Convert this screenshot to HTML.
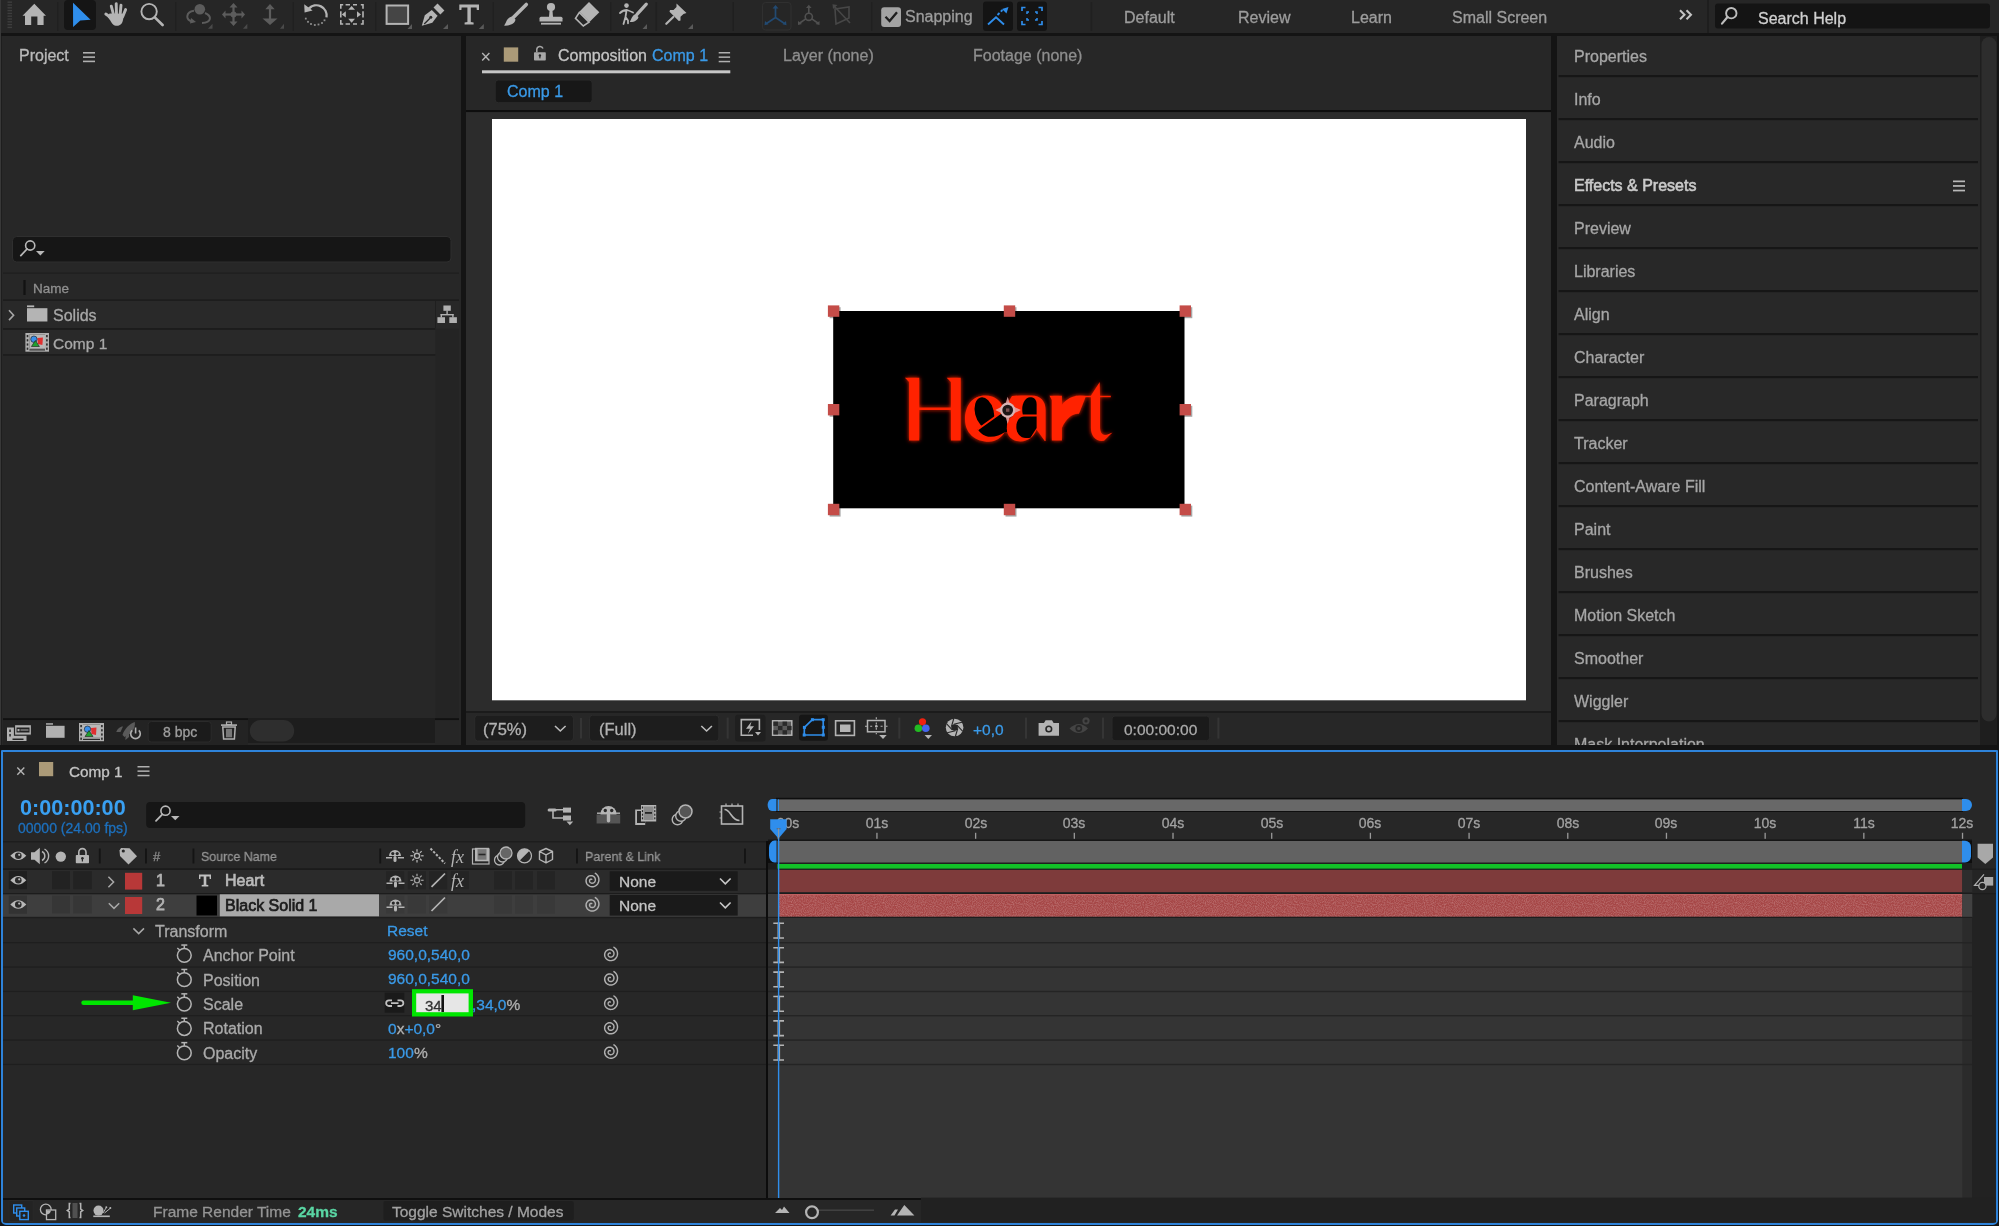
<!DOCTYPE html>
<html><head><meta charset="utf-8">
<style>
*{margin:0;padding:0;box-sizing:border-box}
html,body{width:1999px;height:1226px;overflow:hidden;background:#141414;font-family:"Liberation Sans",sans-serif;color:#a8a8a8}
.a{position:absolute}
.t{position:absolute;white-space:nowrap;font-size:16px;line-height:16px;will-change:transform;-webkit-text-stroke:0.3px currentColor}
svg{position:absolute;overflow:visible}
</style></head><body>
<div class="a" style="left:0px;top:0px;width:1999px;height:33px;background:#262626;"></div>
<div class="a" style="left:0px;top:33px;width:1999px;height:3px;background:#141414;"></div>
<svg style="left:0;top:0" width="1999" height="1226" viewBox="0 0 1999 1226"><rect x="7.5" y="1.5" width="4.5" height="1.4" fill="#3e3e3e"/><rect x="7.5" y="4.3" width="4.5" height="1.4" fill="#3e3e3e"/><rect x="7.5" y="7.1" width="4.5" height="1.4" fill="#3e3e3e"/><rect x="7.5" y="9.899999999999999" width="4.5" height="1.4" fill="#3e3e3e"/><rect x="7.5" y="12.7" width="4.5" height="1.4" fill="#3e3e3e"/><rect x="7.5" y="15.5" width="4.5" height="1.4" fill="#3e3e3e"/><rect x="7.5" y="18.299999999999997" width="4.5" height="1.4" fill="#3e3e3e"/><rect x="7.5" y="21.099999999999998" width="4.5" height="1.4" fill="#3e3e3e"/><rect x="7.5" y="23.9" width="4.5" height="1.4" fill="#3e3e3e"/><rect x="7.5" y="26.7" width="4.5" height="1.4" fill="#3e3e3e"/><rect x="57" y="2" width="1.5" height="29" fill="#202020"/><path d="M34.3,3.8 L46,15.8 L43.6,15.8 L43.6,25 L37.4,25 L37.4,16.6 L31.2,16.6 L31.2,25 L25,25 L25,15.8 L22.5,15.8 Z" fill="#b4b4b4"/><rect x="64" y="0" width="32" height="30" rx="4" fill="#151515"/><path d="M73,2.8 L90.6,19.8 L80.3,20.4 L73.1,27 Z" fill="#2f8eec"/><g stroke="#b4b4b4" stroke-width="2.9" stroke-linecap="round" fill="none"><path d="M113.6,15 L111.3,6.2"/><path d="M116.5,14 L116.2,3.6"/><path d="M120.2,14 L121,5.2"/><path d="M122.8,16.5 L125.6,9.6"/><path d="M111.5,18 L105.8,14"/></g><path d="M109.5,13.5 L124.5,13.8 L123.2,19 C122.5,23.5 120.5,25.8 117,25.8 C113.5,25.8 111.8,23.5 110.3,20.5 L107.6,17 Z" fill="#b4b4b4"/><circle cx="149.1" cy="11.55" r="7.7" stroke="#b4b4b4" stroke-width="1.9" fill="none"/><path d="M154.8,17.4 L162.6,25" stroke="#b4b4b4" stroke-width="2.7" stroke-linecap="round"/><rect x="175" y="2" width="1.5" height="29" fill="#202020"/><circle cx="199.8" cy="9.3" r="5.3" fill="#5c5c5c"/><path d="M194,10.8 C186,12 184.5,20 193,21.5" stroke="#5c5c5c" stroke-width="2" fill="none"/><path d="M191,18 L196,22 L190,23.5 Z" fill="#5c5c5c"/><path d="M205,13 C212,16 212,22.5 202,23" stroke="#5c5c5c" stroke-width="2" fill="none"/><path d="M208,28.7 L212.5,28.7 L212.5,23.8 Z" fill="#4a4a4a"/><g stroke="#5c5c5c" stroke-width="2.2"><path d="M233.5,6 L233.5,23.5"/><path d="M224.5,14.5 L242.5,14.5"/></g><path d="M229.5,7.5 L233.5,3 L237.5,7.5 Z M229.5,21.5 L233.5,26 L237.5,21.5 Z M225.5,10.5 L222,14.5 L225.5,18.5 Z M241.5,10.5 L245,14.5 L241.5,18.5 Z" fill="#5c5c5c"/><circle cx="233.5" cy="14.5" r="3" fill="#5c5c5c"/><path d="M243,28.7 L247.3,28.7 L247.3,23.8 Z" fill="#4a4a4a"/><path d="M270,7 L270,20" stroke="#5c5c5c" stroke-width="2.2"/><path d="M265.3,9.2 L270,4 L274.7,9.2 Z M262.5,18.6 L277.5,18.6 L270,25 Z" fill="#5c5c5c"/><path d="M280,28.7 L284,28.7 L284,23.8 Z" fill="#4a4a4a"/><rect x="292.5" y="2" width="1.5" height="29" fill="#202020"/><path d="M308.8,8.6 A10.3,10.3 0 0 1 326.5,17.4" stroke="#b4b4b4" stroke-width="2.3" fill="none"/><path d="M304.2,4.3 L304.6,12.6 L312.6,10.6 Z" fill="#b4b4b4"/><rect x="304.90000000000003" y="17.700000000000003" width="1.8" height="1.8" fill="#8e8e8e"/><rect x="307.1" y="20.900000000000002" width="1.8" height="1.8" fill="#8e8e8e"/><rect x="310.1" y="23.1" width="1.8" height="1.8" fill="#8e8e8e"/><rect x="313.90000000000003" y="24.1" width="1.8" height="1.8" fill="#8e8e8e"/><rect x="317.6" y="23.6" width="1.8" height="1.8" fill="#8e8e8e"/><rect x="321.1" y="22.1" width="1.8" height="1.8" fill="#8e8e8e"/><rect x="323.6" y="19.400000000000002" width="1.8" height="1.8" fill="#8e8e8e"/><path d="M340.8,8.8 L340.8,4.8 L343.2,4.8 M360.8,4.8 L363,4.8 L363,8.8 M340.8,20 L340.8,24 L343.2,24 M360.8,24 L363,24 L363,20 M345.6,4.8 h4.4 M353,4.8 h4 M345.6,24 h4.4 M353,24 h4 M340.8,11.2 v6.4 M363,11.2 v6.4" stroke="#b4b4b4" stroke-width="1.6" fill="none"/><path d="M348.2,9.8 L351.6,6 L355,9.8 Z M348.2,18.8 L351.6,22.8 L355,18.8 Z M345.8,11.2 L341.8,14.4 L345.8,17.6 Z M357,11.2 L361,14.4 L357,17.6 Z" fill="#b4b4b4"/><rect x="375" y="2" width="1.5" height="29" fill="#202020"/><rect x="386.6" y="5.5" width="21.5" height="18.4" stroke="#b4b4b4" stroke-width="2" fill="#454545"/><path d="M407.5,29 L412,29 L412,24 Z" fill="#5a5a5a"/><path d="M421.8,25.8 L424.8,15.3 L431.8,10 L437.6,15.8 L432.3,22.8 Z" fill="#b4b4b4"/><path d="M424.2,24 L430,18.2" stroke="#262626" stroke-width="1.3"/><circle cx="430.8" cy="17.3" r="1.5" fill="#262626"/><path d="M433.5,7.6 L437.5,3.6 L444.4,10.5 L440.4,14.5 Z" fill="#b4b4b4"/><path d="M443,29 L448,29 L448,24 Z" fill="#5a5a5a"/><path d="M459.3,4.6 L479,4.6 L479,10 L476.8,10 L476.6,7.4 L470.8,7.4 L470.8,22 L473.6,22.4 L473.6,24.5 L464.6,24.5 L464.6,22.4 L467.4,22 L467.4,7.4 L461.6,7.4 L461.4,10 L459.3,10 Z" fill="#b4b4b4"/><path d="M478.8,29 L483.8,29 L483.8,24 Z" fill="#5a5a5a"/><rect x="492.5" y="2" width="1.5" height="29" fill="#202020"/><path d="M526.3,4.4 L513.5,17.2" stroke="#b4b4b4" stroke-width="3.6" stroke-linecap="round"/><path d="M512.5,16.5 L515.5,19.5 C515,23 511,26 503.8,25.6 C506,24 506,20 509,18 C510,17 511.5,16.5 512.5,16.5 Z" fill="#b4b4b4"/><circle cx="551" cy="7" r="4.1" fill="#b4b4b4"/><path d="M549.6,9.5 L552.4,9.5 L553,17 L549,17 Z" fill="#b4b4b4"/><path d="M541,16.8 L561,16.8 Q562.5,16.8 562.5,18.3 L562.5,21.4 L539.5,21.4 L539.5,18.3 Q539.5,16.8 541,16.8 Z" fill="#b4b4b4"/><rect x="541" y="22.8" width="20" height="1.8" fill="#b4b4b4"/><path d="M589,2 L599.3,12.3 L589.5,22 L579.3,11.8 Z" fill="#b4b4b4"/><path d="M579.3,12.5 L589,22.2 L583.3,26 L575.5,18.3 Z" stroke="#b4b4b4" stroke-width="1.6" fill="none"/><rect x="610" y="2" width="1.5" height="29" fill="#202020"/><circle cx="626.5" cy="5.6" r="2.3" fill="#b4b4b4"/><path d="M620,13 Q623,10 627,10 Q630,11 633,12.5 M626.5,10.5 L625.5,17 L623.5,24 M625.5,17 L628,20.5 L628,23.3" stroke="#b4b4b4" stroke-width="1.8" fill="none" stroke-linecap="round"/><path d="M646.3,4.2 L637,14.4" stroke="#b4b4b4" stroke-width="3.2" stroke-linecap="round"/><path d="M635.5,14 L638.5,17 C638,20 634,22.5 629.8,22 C631.5,19 632,15.5 635.5,14 Z" fill="#b4b4b4"/><path d="M642.5,29 L647,29 L647,24 Z" fill="#5a5a5a"/><rect x="655.6" y="2" width="1.5" height="29" fill="#202020"/><path d="M676.5,3.5 L686.5,13 L683.5,14 L680.5,16.8 L680.5,20.5 L678.8,21 L669.5,11.8 L670,10 L673.5,10 L676.5,7 Z" fill="#b4b4b4"/><path d="M673.3,17 L666.3,23.8" stroke="#b4b4b4" stroke-width="2.2" stroke-linecap="round"/><path d="M688,29 L693,29 L693,24 Z" fill="#5a5a5a"/><rect x="732.4" y="2" width="1.5" height="29" fill="#202020"/><rect x="762.5" y="2.5" width="28.5" height="27.5" rx="3" stroke="#303030" stroke-width="1" fill="none"/><g stroke="#224a72" stroke-width="1.7" fill="none"><path d="M775.5,17.5 L775.5,7.5 M775.5,17.5 L766.5,23.5 M775.5,17.5 L784.5,23.5"/></g><path d="M772.5,8.5 L775.5,5 L778.5,8.5 Z M765,21 L764.5,25.3 L768.5,24.3 Z M786,21 L786.5,25.3 L782.5,24.3 Z" fill="#224a72"/><g stroke="#505050" stroke-width="1.6" fill="none"><circle cx="808.8" cy="16.8" r="3.6"/><path d="M808.8,13.2 L808.8,6.5 M805.8,18.8 L799.8,23 M811.8,18.8 L817.8,23"/></g><path d="M806,8 L808.8,4.8 L811.6,8 Z M798,21 L798,25 L802,24 Z M819.5,21 L819.5,25 L815.5,24 Z" fill="#505050"/><g stroke="#474747" stroke-width="1.6" fill="none"><path d="M835,9 L849,7 L849,18 L836,24 Z"/><path d="M834,6 L850,23"/></g><path d="M832.5,4.3 L837.5,5 L833,9 Z" fill="#474747"/><rect x="871" y="2" width="1.5" height="29" fill="#202020"/><rect x="881.2" y="7.2" width="19.8" height="19.8" rx="3" fill="#a3a3a3"/><path d="M885.5,16.8 L889.6,21 L897,12.2" stroke="#1e1e1e" stroke-width="2.3" fill="none"/><rect x="983" y="1.5" width="30" height="29.5" rx="3" fill="#141414"/><rect x="1017" y="1.5" width="30" height="29.5" rx="3" fill="#141414"/><path d="M988,24.5 L996,17.3 L1004,24.5" stroke="#2f8eec" stroke-width="1.9" fill="none"/><path d="M997.5,15 L999.5,13 M1000.8,11.7 L1002.5,10" stroke="#2f8eec" stroke-width="1.8"/><path d="M1002,9 L1008.5,7 L1006.5,13.5 Z" fill="#2f8eec"/><path d="M1022,11 L1022,7.5 L1025.5,7.5 M1038.5,7.5 L1042,7.5 L1042,11 M1042,21 L1042,24.5 L1038.5,24.5 M1025.5,24.5 L1022,24.5 L1022,21" stroke="#2f8eec" stroke-width="1.7" fill="none"/><path d="M1027,14 L1027,12 L1029,12 M1035,12 L1037,12 L1037,14 M1037,18 L1037,20 L1035,20 M1029,20 L1027,20 L1027,18" stroke="#2f8eec" stroke-width="1.5" fill="none"/><rect x="1090.7" y="2" width="1.5" height="29" fill="#202020"/><path d="M1680,10.3 L1684.5,14.8 L1680,19.3 M1686.5,10.3 L1691,14.8 L1686.5,19.3" stroke="#c4c4c4" stroke-width="2" fill="none"/><rect x="1707" y="0" width="2" height="33" fill="#1e1e1e"/><rect x="1715" y="3.6" width="275" height="25" rx="3" fill="#141414"/><circle cx="1731.3" cy="13.2" r="5.2" stroke="#bdbdbd" stroke-width="1.9" fill="none"/><path d="M1727.5,17 L1722,23.6" stroke="#bdbdbd" stroke-width="2.2" stroke-linecap="round"/></svg>
<div class="t" style="left:905.00px;top:9.46px;font-size:16px;line-height:16px;color:#9d9d9d;font-weight:normal;">Snapping</div>
<div class="t" style="left:1124.00px;top:9.66px;font-size:16px;line-height:16px;color:#9d9d9d;font-weight:normal;">Default</div>
<div class="t" style="left:1238.00px;top:9.66px;font-size:16px;line-height:16px;color:#9d9d9d;font-weight:normal;">Review</div>
<div class="t" style="left:1351.40px;top:9.66px;font-size:16px;line-height:16px;color:#9d9d9d;font-weight:normal;">Learn</div>
<div class="t" style="left:1452.00px;top:9.66px;font-size:16px;line-height:16px;color:#9d9d9d;font-weight:normal;">Small Screen</div>
<div class="t" style="left:1758.00px;top:11.46px;font-size:16px;line-height:16px;color:#d0d0d0;font-weight:normal;">Search Help</div>
<div class="a" style="left:2px;top:36px;width:459px;height:709px;background:#272727;"></div>
<div class="a" style="left:0px;top:0px;width:1px;height:745px;background:#383838;"></div>
<div class="a" style="left:1px;top:36px;width:1px;height:709px;background:#1e1e1e;"></div>
<div class="t" style="left:19.00px;top:48.46px;font-size:16px;line-height:16px;color:#bababa;font-weight:normal;">Project</div>
<svg style="left:0;top:0" width="1999" height="1226" viewBox="0 0 1999 1226"><rect x="83" y="52.00" width="12" height="1.6" fill="#b0b0b0"/><rect x="83" y="56.30" width="12" height="1.6" fill="#b0b0b0"/><rect x="83" y="60.60" width="12" height="1.6" fill="#b0b0b0"/><rect x="12.5" y="236.5" width="438.5" height="25.5" rx="4" fill="#161616" stroke="#2f2f2f" stroke-width="1"/><circle cx="30.2" cy="245.5" r="4.6" stroke="#b8b8b8" stroke-width="1.6" fill="none"/><path d="M27,249 L20.8,255.6" stroke="#b8b8b8" stroke-width="1.8" stroke-linecap="round"/><path d="M36,251 L44.7,251 L40.35,255.6 Z" fill="#b8b8b8"/><rect x="3" y="272.5" width="456" height="1.2" fill="#1f1f1f"/><rect x="3" y="299.3" width="456" height="1.6" fill="#1d1d1d"/><rect x="23.4" y="280" width="2.2" height="15" fill="#121212"/><rect x="3" y="301" width="432.5" height="27" fill="#292929"/><rect x="3" y="328" width="432.5" height="1.8" fill="#1c1c1c"/><rect x="3" y="330" width="432.5" height="24" fill="#292929"/><rect x="3" y="354" width="432.5" height="1.8" fill="#1d1d1d"/><rect x="435.6" y="301" width="23.4" height="417" fill="#242424"/><rect x="435.6" y="301" width="23.4" height="27.5" fill="#282828"/><rect x="435" y="301" width="1" height="27" fill="#1f1f1f"/><path d="M9,310.3 L13.6,315.2 L9,320.1" stroke="#a6a6a6" stroke-width="1.6" fill="none"/><rect x="27" y="305.4" width="7.2" height="1.8" fill="#b4b4b4"/><rect x="27" y="308.2" width="20.4" height="13.3" fill="#b4b4b4"/><rect x="25.4" y="333" width="23.6" height="18.7" fill="#b0b0b0"/><rect x="29.4" y="334.6" width="15.600000000000001" height="13.7" fill="#2a2a2a"/><rect x="29.4" y="349.3" width="15.600000000000001" height="1.2" fill="#2a2a2a"/><rect x="26.7" y="335.0" width="1.6" height="2.2" fill="#2a2a2a"/><rect x="46.1" y="335.0" width="1.6" height="2.2" fill="#2a2a2a"/><rect x="26.7" y="339.2" width="1.6" height="2.2" fill="#2a2a2a"/><rect x="46.1" y="339.2" width="1.6" height="2.2" fill="#2a2a2a"/><rect x="26.7" y="343.4" width="1.6" height="2.2" fill="#2a2a2a"/><rect x="46.1" y="343.4" width="1.6" height="2.2" fill="#2a2a2a"/><rect x="26.7" y="347.6" width="1.6" height="2.2" fill="#2a2a2a"/><rect x="46.1" y="347.6" width="1.6" height="2.2" fill="#2a2a2a"/><rect x="29.4" y="334.6" width="15.600000000000001" height="13.7" fill="#b8b8b8"/><path d="M37.4,338 L42.9,337.5 L42.4,345 L37.9,344 Z" fill="#e03030"/><circle cx="33.9" cy="339.2" r="3.2" fill="#3a8ee8" stroke="#1a1a1a" stroke-width="0.6"/><path d="M31.4,346.5 L35.4,340.5 L39.4,346.5 Z" fill="#20a030" stroke="#1a1a1a" stroke-width="0.6"/><rect x="443.4" y="305.5" width="7.4" height="5.3" fill="#b0b0b0"/><rect x="446.4" y="310.5" width="1.4" height="4" fill="#b0b0b0"/><rect x="440.6" y="314" width="13" height="1.4" fill="#b0b0b0"/><rect x="440.6" y="314" width="1.4" height="3.5" fill="#b0b0b0"/><rect x="452.2" y="314" width="1.4" height="3.5" fill="#b0b0b0"/><rect x="437.4" y="317.2" width="7.6" height="5.8" fill="#b0b0b0"/><rect x="449.3" y="317.2" width="7.6" height="5.8" fill="#b0b0b0"/><rect x="3" y="718.2" width="245" height="2" fill="#111111"/><rect x="435" y="718.2" width="24" height="2" fill="#111111"/><rect x="3" y="720.2" width="245" height="24.8" fill="#232323"/><rect x="248" y="718" width="187" height="25" fill="#1d1d1d"/><rect x="435" y="720.2" width="24" height="24.8" fill="#262626"/><rect x="249.8" y="720" width="44.4" height="21.5" rx="10.7" fill="#2e2e2e"/><rect x="7" y="727.5" width="19.5" height="13.5" fill="#b0b0b0"/><rect x="9.3" y="729.5" width="1.5" height="2.5" fill="#232323"/><rect x="9.3" y="734" width="1.5" height="2.5" fill="#232323"/><rect x="12.5" y="738.5" width="11" height="1.5" fill="#232323"/><rect x="14.5" y="724.6" width="17" height="10.6" fill="#b0b0b0" stroke="#232323" stroke-width="1.2"/><rect x="16.5" y="727.5" width="13" height="5" fill="#232323"/><rect x="17.5" y="729" width="2" height="2.2" fill="#b0b0b0"/><rect x="20.5" y="729.5" width="8" height="1" fill="#b0b0b0"/><rect x="46" y="723.2" width="7" height="1.5" fill="#b0b0b0"/><rect x="46" y="725.8" width="18.6" height="12" fill="#b0b0b0"/><rect x="79" y="723" width="25" height="18.2" fill="#b0b0b0"/><rect x="83" y="724.6" width="17" height="13.2" fill="#2a2a2a"/><rect x="83" y="738.8000000000001" width="17" height="1.2" fill="#2a2a2a"/><rect x="80.3" y="725.0" width="1.6" height="2.2" fill="#2a2a2a"/><rect x="101.1" y="725.0" width="1.6" height="2.2" fill="#2a2a2a"/><rect x="80.3" y="729.2" width="1.6" height="2.2" fill="#2a2a2a"/><rect x="101.1" y="729.2" width="1.6" height="2.2" fill="#2a2a2a"/><rect x="80.3" y="733.4" width="1.6" height="2.2" fill="#2a2a2a"/><rect x="101.1" y="733.4" width="1.6" height="2.2" fill="#2a2a2a"/><rect x="80.3" y="737.6" width="1.6" height="2.2" fill="#2a2a2a"/><rect x="101.1" y="737.6" width="1.6" height="2.2" fill="#2a2a2a"/><rect x="83" y="724.6" width="17" height="13.2" fill="#b8b8b8"/><path d="M91,728 L96.5,727.5 L96,735 L91.5,734 Z" fill="#e03030"/><circle cx="87.5" cy="729.2" r="3.2" fill="#3a8ee8" stroke="#1a1a1a" stroke-width="0.6"/><path d="M85,736.5 L89,730.5 L93,736.5 Z" fill="#20a030" stroke="#1a1a1a" stroke-width="0.6"/><path d="M134.8,722 C130,723.5 124,729 122.5,735 L124.5,737 C130,735 136,729 134.8,722 Z" fill="#5a5a5a"/><path d="M116.3,732 C117,729 120,726.5 123,726.5 L120.5,732 Z M125.5,740 C125,737 126,735 129,733.5 L129,737 Z" fill="#5a5a5a"/><path d="M132.2,730.3 A4.8,4.8 0 1 0 138.8,730.3" stroke="#b0b0b0" stroke-width="1.6" fill="none"/><rect x="134.8" y="727.5" width="1.6" height="6" fill="#b0b0b0"/><rect x="148.2" y="721.5" width="63" height="20.5" rx="3" fill="#1b1b1b" stroke="#2b2b2b" stroke-width="1"/><rect x="221" y="724.3" width="16" height="1.6" fill="#b0b0b0"/><rect x="226.5" y="722" width="5" height="2.5" fill="none" stroke="#b0b0b0" stroke-width="1.2"/><path d="M222.8,727 L235.2,727 L234.4,739 L223.6,739 Z" fill="none" stroke="#b0b0b0" stroke-width="1.5"/><rect x="226.4" y="728.8" width="1.2" height="8.5" fill="#b0b0b0"/><rect x="228.4" y="728.8" width="1.2" height="8.5" fill="#b0b0b0"/><rect x="230.4" y="728.8" width="1.2" height="8.5" fill="#b0b0b0"/></svg>
<div class="t" style="left:33.00px;top:281.57px;font-size:13.5px;line-height:13.5px;color:#909090;font-weight:normal;">Name</div>
<div class="t" style="left:53.00px;top:307.96px;font-size:16px;line-height:16px;color:#a8a8a8;font-weight:normal;">Solids</div>
<div class="t" style="left:53.00px;top:335.88px;font-size:15.5px;line-height:15.5px;color:#a8a8a8;font-weight:normal;">Comp 1</div>
<div class="t" style="left:163.00px;top:725.45px;font-size:14px;line-height:14px;color:#9e9e9e;font-weight:normal;">8 bpc</div>
<div class="a" style="left:466px;top:36px;width:1085px;height:709px;background:#272727;"></div>
<svg style="left:0;top:0" width="1999" height="1226" viewBox="0 0 1999 1226"><path d="M482.2,53 L489.4,60.6 M489.4,53 L482.2,60.6" stroke="#b4b4b4" stroke-width="1.4"/><rect x="503.8" y="47.4" width="14.4" height="14.3" fill="#ab9a78"/><rect x="534" y="52.2" width="11.8" height="8.4" rx="0.8" fill="#a8a8a8"/><path d="M536.8,52.3 L536.8,49.5 A3.2,3.2 0 0 1 543,48.5" stroke="#a8a8a8" stroke-width="1.5" fill="none"/><circle cx="539.9" cy="55.4" r="1.2" fill="#272727"/><rect x="539.3" y="55.4" width="1.2" height="3" fill="#272727"/><rect x="718.7" y="52.00" width="11.4" height="1.5" fill="#b0b0b0"/><rect x="718.7" y="56.40" width="11.4" height="1.5" fill="#b0b0b0"/><rect x="718.7" y="60.80" width="11.4" height="1.5" fill="#b0b0b0"/><rect x="482" y="70.3" width="248.3" height="3" fill="#c6c6c6"/><rect x="495.2" y="80" width="97" height="22.8" rx="3" fill="#171717" stroke="#2b2b2b" stroke-width="1"/><rect x="466" y="110" width="1085" height="2.2" fill="#0e0e0e"/><rect x="466" y="112.2" width="1085" height="599" fill="#2c2c2c"/><rect x="466" y="711" width="1085" height="2" fill="#1b1b1b"/><rect x="492" y="119" width="1034" height="581.3" fill="#ffffff"/><rect x="833.2" y="311" width="351.3" height="197.3" fill="#000000"/><rect x="829.6" y="307.2" width="11" height="11" fill="rgba(0,0,0,0.35)"/><rect x="827.9" y="305.4" width="11.4" height="11.4" fill="#c44c48"/><rect x="829.6" y="405.8" width="11" height="11" fill="rgba(0,0,0,0.35)"/><rect x="827.9" y="404.0" width="11.4" height="11.4" fill="#c44c48"/><rect x="829.6" y="505.6" width="11" height="11" fill="rgba(0,0,0,0.35)"/><rect x="827.9" y="503.8" width="11.4" height="11.4" fill="#c44c48"/><rect x="1005.5" y="307.2" width="11" height="11" fill="rgba(0,0,0,0.35)"/><rect x="1003.8" y="305.4" width="11.4" height="11.4" fill="#c44c48"/><rect x="1005.5" y="505.6" width="11" height="11" fill="rgba(0,0,0,0.35)"/><rect x="1003.8" y="503.8" width="11.4" height="11.4" fill="#c44c48"/><rect x="1181.3" y="307.2" width="11" height="11" fill="rgba(0,0,0,0.35)"/><rect x="1179.6" y="305.4" width="11.4" height="11.4" fill="#c44c48"/><rect x="1181.3" y="405.8" width="11" height="11" fill="rgba(0,0,0,0.35)"/><rect x="1179.6" y="404.0" width="11.4" height="11.4" fill="#c44c48"/><rect x="1181.3" y="505.6" width="11" height="11" fill="rgba(0,0,0,0.35)"/><rect x="1179.6" y="503.8" width="11.4" height="11.4" fill="#c44c48"/></svg>
<svg style="left:0;top:0" width="1999" height="1226" viewBox="0 0 1999 1226"><defs><filter id="glow" x="-20%%" y="-40%%" width="140%%" height="180%%"><feGaussianBlur in="SourceGraphic" stdDeviation="2.2" result="b"/><feMerge><feMergeNode in="b"/><feMergeNode in="SourceGraphic"/></feMerge></filter></defs><g filter="url(#glow)"><path d="M904.9,377.8 L919.25,377.8 L919.25,407.4 L950.9,407.4 L950.9,382 L946.7,377.8 L960.7,377.8 L960.7,440.5 L950.9,440.5 L950.9,409.9 L919.25,409.9 L919.25,440.5 L909.1,440.5 L909.1,382 Z" fill="#ff2400"/><path d="M1003.5,410.5 C1002,401 995,395.6 985.2,395.6 C972.5,395.6 965,406 965,419.3 C965,433 975,441.8 988.8,441.8 C996,441.8 1001.5,437.5 1004.6,432.3 L1006,410.5 Z" fill="#ff2400"/><ellipse cx="984.4" cy="412.6" rx="9.4" ry="15.6" transform="rotate(-14 984.4 412.6)" fill="#000"/><path d="M977.6,429.2 L1003.5,411 L1007,411 L1007,432 L1004.6,432.3 C1001,434.8 996,436.8 990.5,436.8 C985,436.8 980.5,433.5 977.6,429.2 Z" fill="#000"/><path d="M977.6,429.4 L1003.8,410.8" stroke="#ff2400" stroke-width="1.9"/><path d="M1003,411 L1012,396 C1018,395.6 1024,395.6 1032,395.6 C1040,395.6 1045.6,401 1045.6,410 L1045.6,441 L1044.7,441 L1036.6,429.6 C1034,437 1028,441.5 1020.5,441.5 C1012,441.5 1006.8,436 1006.8,428.5 C1006.8,421 1010,417.5 1013,416.5 Z" fill="#ff2400"/><path d="M1036.6,414.4 L1036.6,404 C1036.6,399 1033.5,397.2 1030,397.2 C1025.5,397.2 1022.2,403 1022.2,409 C1022.2,411 1022.4,413 1022.8,414.4 Z" fill="#000"/><path d="M1036.6,416.6 L1036.6,428 L1030.5,437.7 C1029,437.9 1027.5,438 1026,438 C1020,438 1016.3,433 1016.3,427 C1016.3,420.5 1020,416.6 1024,416.6 Z" fill="#000"/><path d="M1049.5,395.8 L1061.9,395.8 L1061.9,405 C1066,399 1073,395.8 1080,395.8 L1086,396 L1079,413.7 C1073,413 1066,418 1061.9,428 L1061.9,440.5 L1051.8,440.5 L1051.8,400 Z" fill="#ff2400"/><path d="M1099.7,382.1 L1100,395.8 L1110.8,395.8 L1110.8,397.3 L1100,397.3 L1100,427 C1100,432 1102,435 1105,435 C1107.5,435 1110,433.5 1112.5,432.6 L1104,440.8 C1096,442 1090.9,436 1090.9,428 L1090.9,397.3 L1075,397.3 L1075.6,395.8 L1090.9,395.8 Z" fill="#ff2400"/></g><g transform="translate(1007.7,410.1)"><path d="M0,-13.3 L2.6,-5 L13.3,0 L2.6,5 L0,14 L-2.6,5 L-12.4,0 L-2.6,-5 Z" fill="#e6a6a6" opacity="0.85"/><circle r="7.6" fill="#d8b4b4"/><circle r="5.4" fill="#1e1616"/><rect x="-1.7" y="-1.7" width="3.4" height="3.4" fill="#7a5050"/></g><rect x="474.7" y="715.2" width="98.7" height="25.8" rx="3" fill="#1d1d1d" stroke="#2c2c2c" stroke-width="1"/><path d="M555,726 L560.3,731 L565.6,726" stroke="#bcbcbc" stroke-width="1.6" fill="none"/><rect x="580" y="718" width="2" height="20.5" fill="#353535"/><rect x="589.5" y="715.2" width="129.3" height="25.8" rx="3" fill="#1d1d1d" stroke="#2c2c2c" stroke-width="1"/><path d="M701.3,726 L706.6,731 L711.9,726" stroke="#bcbcbc" stroke-width="1.6" fill="none"/><rect x="726.7" y="717.6" width="2" height="21" fill="#353535"/><rect x="735" y="714.8" width="30.5" height="26.6" rx="3" fill="#1f1f1f"/><path d="M753,735.3 L741.3,735.3 L741.3,719.6 L759.4,719.6 L759.4,730" stroke="#b4b4b4" stroke-width="1.6" fill="none"/><path d="M751.5,721.5 L746,728.8 L750,728.8 L747.8,734 L754,726.3 L750.2,726.3 Z" fill="#b4b4b4"/><path d="M755,732 L761,732 L758,735.5 Z" fill="#b4b4b4"/><rect x="772.6" y="720.8" width="19.2" height="14.4" stroke="#b4b4b4" stroke-width="1.5" fill="#5a5a5a"/><rect x="773.40" y="721.60" width="4.55" height="4.3" fill="#2a2a2a"/><rect x="773.40" y="730.20" width="4.55" height="4.3" fill="#2a2a2a"/><rect x="777.95" y="725.90" width="4.55" height="4.3" fill="#2a2a2a"/><rect x="782.50" y="721.60" width="4.55" height="4.3" fill="#2a2a2a"/><rect x="782.50" y="730.20" width="4.55" height="4.3" fill="#2a2a2a"/><rect x="787.05" y="725.90" width="4.55" height="4.3" fill="#2a2a2a"/><rect x="799" y="714.8" width="29" height="26" rx="3" fill="#161616"/><path d="M812.4,719.7 L823.2,719.7 L823.3,735 L804.2,735 L804.4,727.4 Z" stroke="#2f8eec" stroke-width="1.7" fill="none" stroke-linejoin="round"/><rect x="810.9" y="718.2" width="3" height="3" fill="#2f8eec"/><rect x="821.7" y="718.2" width="3" height="3" fill="#2f8eec"/><rect x="821.8" y="725.8" width="3" height="3" fill="#2f8eec"/><rect x="821.8" y="733.5" width="3" height="3" fill="#2f8eec"/><rect x="802.7" y="733.5" width="3" height="3" fill="#2f8eec"/><rect x="802.9" y="725.9" width="3" height="3" fill="#2f8eec"/><rect x="835.6" y="720.8" width="18.8" height="14.6" stroke="#b4b4b4" stroke-width="1.6" fill="none"/><rect x="840" y="724.5" width="10.5" height="7.5" fill="#b4b4b4"/><rect x="867.5" y="720.5" width="17.5" height="11.3" stroke="#b4b4b4" stroke-width="1.5" fill="none"/><path d="M876.3,717.3 L876.3,734.2 M865,726.2 L887.5,726.2" stroke="#b4b4b4" stroke-width="1.1" stroke-dasharray="2,3.2"/><circle cx="876.3" cy="726.2" r="1.3" fill="#b4b4b4"/><path d="M879.2,735 L886.7,735 L883,739 Z" fill="#b4b4b4"/><rect x="898.3" y="717.6" width="2" height="21" fill="#353535"/><circle cx="922.5" cy="721.8" r="3.6" fill="#ee2211"/><circle cx="918.4" cy="728.3" r="3.8" fill="#22bb22"/><circle cx="925.8" cy="728.3" r="3.8" fill="#4466ee"/><path d="M924.6,735 L932,735 L928.3,739 Z" fill="#b4b4b4"/><circle cx="954.6" cy="727.5" r="8.8" fill="#b4b4b4"/><circle cx="954.6" cy="727.5" r="3.3" fill="#272727"/><g stroke="#272727" stroke-width="1.1" fill="none"><path d="M957.79,728.35 L955.38,736.47"/><path d="M955.45,730.69 L947.23,732.66"/><path d="M952.27,729.83 L946.44,723.70"/><path d="M951.41,726.65 L953.82,718.53"/><path d="M953.75,724.31 L961.97,722.34"/><path d="M956.93,725.17 L962.76,731.30"/></g><rect x="1025" y="717.6" width="2" height="21" fill="#353535"/><path d="M1038.6,723 L1044,723 L1045.6,720.2 L1052,720.2 L1053.6,723 L1059,723 L1059,735.8 L1038.6,735.8 Z" fill="#b4b4b4"/><circle cx="1048.8" cy="729" r="3.6" fill="#272727"/><circle cx="1048.8" cy="729" r="2" fill="#b4b4b4"/><path d="M1069.5,728.5 Q1079,719.5 1088,728.5 Q1079,737.5 1069.5,728.5 Z" fill="#444444"/><circle cx="1078.8" cy="728.5" r="3.4" fill="#272727"/><circle cx="1078.8" cy="728.5" r="1.7" fill="#444"/><circle cx="1086" cy="720.8" r="3.6" fill="#444"/><circle cx="1086" cy="721" r="1.6" fill="#272727"/><rect x="1102" y="717.6" width="2" height="21" fill="#353535"/><rect x="1112" y="716" width="97.6" height="24.7" rx="3" fill="#1a1a1a" stroke="#2a2a2a" stroke-width="1"/><rect x="1217.4" y="717.6" width="2" height="21" fill="#353535"/></svg>
<div class="t" style="left:558.40px;top:48.46px;font-size:16px;line-height:16px;color:#c4c4c4;font-weight:normal;">Composition</div>
<div class="t" style="left:652.00px;top:48.46px;font-size:16px;line-height:16px;color:#3a9ae8;font-weight:normal;">Comp 1</div>
<div class="t" style="left:783.00px;top:47.96px;font-size:16px;line-height:16px;color:#8e8e8e;font-weight:normal;">Layer (none)</div>
<div class="t" style="left:973.40px;top:47.96px;font-size:16px;line-height:16px;color:#8e8e8e;font-weight:normal;">Footage (none)</div>
<div class="t" style="left:507.00px;top:84.06px;font-size:16px;line-height:16px;color:#3a9ae8;font-weight:normal;">Comp 1</div>
<div class="t" style="left:483.00px;top:720.63px;font-size:16.5px;line-height:16.5px;color:#b2b2b2;font-weight:normal;">(75%)</div>
<div class="t" style="left:598.70px;top:720.63px;font-size:16.5px;line-height:16.5px;color:#b2b2b2;font-weight:normal;">(Full)</div>
<div class="t" style="left:973.30px;top:721.58px;font-size:15.5px;line-height:15.5px;color:#3a9ae8;font-weight:normal;">+0,0</div>
<div class="t" style="left:1124.00px;top:721.58px;font-size:15.5px;line-height:15.5px;color:#aaaaaa;font-weight:normal;">0:00:00:00</div>
<div class="a" style="left:1557px;top:36px;width:440px;height:709px;background:#1e1e1e;"></div>
<div class="a" style="left:1557px;top:36px;width:423px;height:709px;overflow:hidden;background:#282828">
<svg style="left:0;top:0" width="423" height="709" viewBox="0 0 423 709"><rect x="1.5" y="39" width="419.5" height="2.2" fill="#161616"/><rect x="1.5" y="82" width="419.5" height="2.2" fill="#161616"/><rect x="1.5" y="125" width="419.5" height="2.2" fill="#161616"/><rect x="1.5" y="168" width="419.5" height="2.2" fill="#161616"/><rect x="1.5" y="211" width="419.5" height="2.2" fill="#161616"/><rect x="1.5" y="254" width="419.5" height="2.2" fill="#161616"/><rect x="1.5" y="297" width="419.5" height="2.2" fill="#161616"/><rect x="1.5" y="340" width="419.5" height="2.2" fill="#161616"/><rect x="1.5" y="383" width="419.5" height="2.2" fill="#161616"/><rect x="1.5" y="426" width="419.5" height="2.2" fill="#161616"/><rect x="1.5" y="469" width="419.5" height="2.2" fill="#161616"/><rect x="1.5" y="512" width="419.5" height="2.2" fill="#161616"/><rect x="1.5" y="555" width="419.5" height="2.2" fill="#161616"/><rect x="1.5" y="598" width="419.5" height="2.2" fill="#161616"/><rect x="1.5" y="641" width="419.5" height="2.2" fill="#161616"/><rect x="1.5" y="684" width="419.5" height="2.2" fill="#161616"/><rect x="1.5" y="727" width="419.5" height="2.2" fill="#161616"/></svg>
<div class="t" style="left:16.90px;top:13.06px;font-size:16px;line-height:16px;color:#a6a6a6;font-weight:normal;">Properties</div>
<div class="t" style="left:16.90px;top:56.06px;font-size:16px;line-height:16px;color:#a6a6a6;font-weight:normal;">Info</div>
<div class="t" style="left:16.90px;top:99.06px;font-size:16px;line-height:16px;color:#a6a6a6;font-weight:normal;">Audio</div>
<div class="t" style="left:16.90px;top:142.06px;font-size:16px;line-height:16px;color:#cacaca;font-weight:normal;-webkit-text-stroke:0.6px currentColor">Effects &amp; Presets</div>
<div class="t" style="left:16.90px;top:185.06px;font-size:16px;line-height:16px;color:#a6a6a6;font-weight:normal;">Preview</div>
<div class="t" style="left:16.90px;top:228.06px;font-size:16px;line-height:16px;color:#a6a6a6;font-weight:normal;">Libraries</div>
<div class="t" style="left:16.90px;top:271.06px;font-size:16px;line-height:16px;color:#a6a6a6;font-weight:normal;">Align</div>
<div class="t" style="left:16.90px;top:314.06px;font-size:16px;line-height:16px;color:#a6a6a6;font-weight:normal;">Character</div>
<div class="t" style="left:16.90px;top:357.06px;font-size:16px;line-height:16px;color:#a6a6a6;font-weight:normal;">Paragraph</div>
<div class="t" style="left:16.90px;top:400.06px;font-size:16px;line-height:16px;color:#a6a6a6;font-weight:normal;">Tracker</div>
<div class="t" style="left:16.90px;top:443.06px;font-size:16px;line-height:16px;color:#a6a6a6;font-weight:normal;">Content-Aware Fill</div>
<div class="t" style="left:16.90px;top:486.06px;font-size:16px;line-height:16px;color:#a6a6a6;font-weight:normal;">Paint</div>
<div class="t" style="left:16.90px;top:529.06px;font-size:16px;line-height:16px;color:#a6a6a6;font-weight:normal;">Brushes</div>
<div class="t" style="left:16.90px;top:572.06px;font-size:16px;line-height:16px;color:#a6a6a6;font-weight:normal;">Motion Sketch</div>
<div class="t" style="left:16.90px;top:615.06px;font-size:16px;line-height:16px;color:#a6a6a6;font-weight:normal;">Smoother</div>
<div class="t" style="left:16.90px;top:658.06px;font-size:16px;line-height:16px;color:#a6a6a6;font-weight:normal;">Wiggler</div>
<div class="t" style="left:16.90px;top:701.06px;font-size:16px;line-height:16px;color:#a6a6a6;font-weight:normal;">Mask Interpolation</div>
</div>
<svg style="left:0;top:0" width="1999" height="1226" viewBox="0 0 1999 1226"><rect x="1953" y="180.50" width="12" height="1.7" fill="#b8b8b8"/><rect x="1953" y="185.10" width="12" height="1.7" fill="#b8b8b8"/><rect x="1953" y="189.70" width="12" height="1.7" fill="#b8b8b8"/><rect x="1981.5" y="37" width="15" height="684.5" rx="7.5" fill="#2d2d2d"/></svg>
<div class="a" style="left:1px;top:750px;width:1997px;height:474.5px;border:2px solid #2e83da;border-radius:1px 1px 5px 5px;background:#272727"></div>
<svg style="left:0;top:0" width="1999" height="1226" viewBox="0 0 1999 1226"><path d="M17.3,767.6 L24.3,774.8 M24.3,767.6 L17.3,774.8" stroke="#b4b4b4" stroke-width="1.4"/><rect x="39" y="762" width="14.2" height="14.2" fill="#ab9a78"/><rect x="137.5" y="766.00" width="12" height="1.5" fill="#b0b0b0"/><rect x="137.5" y="770.40" width="12" height="1.5" fill="#b0b0b0"/><rect x="137.5" y="774.80" width="12" height="1.5" fill="#b0b0b0"/><rect x="146.2" y="802" width="379" height="26" rx="4" fill="#161616"/><circle cx="165.5" cy="810.7" r="4.6" stroke="#b8b8b8" stroke-width="1.6" fill="none"/><path d="M162.3,814.3 L156,820.8" stroke="#b8b8b8" stroke-width="1.8" stroke-linecap="round"/><path d="M171,816 L179.5,816 L175.25,820.2 Z" fill="#b8b8b8"/><path d="M549,809.8 L556,809.8 M553,809.8 L553,818 L563,818 M556,809.8 L563,809.8" stroke="#b4b4b4" stroke-width="1.6" fill="none"/><rect x="547.6" y="808.5" width="9" height="3" rx="1.5" fill="#b4b4b4"/><rect x="563" y="807.6" width="8" height="5" fill="#b4b4b4"/><rect x="563" y="815.5" width="8" height="5" fill="#b4b4b4"/><path d="M566.5,821.6 L573.2,821.6 L569.85,825.3 Z" fill="#b4b4b4"/><rect x="596.6" y="814.5" width="23.6" height="9" fill="#555"/><path d="M600.5,814 A8,8 0 0 1 616.5,814 L616.5,814.5 L600.5,814.5 Z" fill="#b4b4b4"/><circle cx="605.3" cy="810.5" r="1.7" fill="#272727"/><circle cx="611.7" cy="810.5" r="1.7" fill="#272727"/><rect x="606.8" y="813" width="3.4" height="9.5" rx="1.7" fill="#b4b4b4"/><rect x="597" y="812.5" width="4" height="1.4" fill="#b4b4b4"/><rect x="616" y="812.5" width="4" height="1.4" fill="#b4b4b4"/><rect x="635.2" y="809.5" width="10" height="15.5" fill="#b4b4b4"/><rect x="637" y="811" width="8" height="12" fill="#272727"/><rect x="641" y="805" width="15.2" height="16.5" fill="#b4b4b4"/><rect x="643.7" y="806.5" width="9.8" height="13.5" fill="#8a8a8a"/><rect x="645" y="812" width="7" height="1.8" fill="#272727"/><rect x="641.9" y="806.5" width="1.2" height="2" fill="#272727"/><rect x="654.2" y="806.5" width="1.2" height="2" fill="#272727"/><rect x="641.9" y="810.1" width="1.2" height="2" fill="#272727"/><rect x="654.2" y="810.1" width="1.2" height="2" fill="#272727"/><rect x="641.9" y="813.7" width="1.2" height="2" fill="#272727"/><rect x="654.2" y="813.7" width="1.2" height="2" fill="#272727"/><rect x="641.9" y="817.3" width="1.2" height="2" fill="#272727"/><rect x="654.2" y="817.3" width="1.2" height="2" fill="#272727"/><circle cx="677.5" cy="819.5" r="5.3" stroke="#b4b4b4" stroke-width="1.4" fill="#272727"/><circle cx="681" cy="816" r="5.3" stroke="#b4b4b4" stroke-width="1.4" fill="#272727"/><circle cx="685.5" cy="811.5" r="6.5" stroke="#b4b4b4" stroke-width="1.5" fill="#555"/><rect x="721.5" y="806" width="21" height="18" stroke="#b4b4b4" stroke-width="1.6" fill="none"/><path d="M724.5,809.5 C731,809.5 731,820.5 739.5,820.5" stroke="#b4b4b4" stroke-width="1.6" fill="none"/><path d="M726,806 v-2.5 M732,806 v-2.5 M738,806 v-2.5 M721.5,812 h-2 M721.5,818 h-2" stroke="#b4b4b4" stroke-width="1.2"/><rect x="766" y="841" width="2" height="357" fill="#0c0c0c"/><rect x="3" y="841" width="763" height="1.4" fill="#1d1d1d"/><rect x="3" y="868.3" width="763" height="1.7" fill="#1b1b1b"/><path d="M10.3,855.7 Q18.3,847.2 26.3,855.7 Q18.3,864.2 10.3,855.7 Z" fill="#b8b8b8"/><circle cx="18.3" cy="855.7" r="3.3" fill="#2a2a2a"/><circle cx="19.2" cy="854.8000000000001" r="1.1" fill="#b8b8b8"/><path d="M31,852.2 L34.5,852.2 L39.8,847.8 L39.8,864.2 L34.5,859.8 L31,859.8 Z" fill="#b4b4b4"/><path d="M42,851.5 A5,5 0 0 1 42,860.5 M44.5,849 A8,8 0 0 1 44.5,863" stroke="#b4b4b4" stroke-width="1.4" fill="none"/><circle cx="60.8" cy="856.6" r="5.2" fill="#b4b4b4"/><rect x="75.8" y="855" width="13.2" height="8.3" rx="0.8" fill="#b4b4b4"/><path d="M78.8,855.2 L78.8,852.2 A3.6,3.6 0 0 1 86,852.2 L86,855.2" stroke="#b4b4b4" stroke-width="1.6" fill="none"/><circle cx="82.4" cy="858.3" r="1.3" fill="#272727"/><rect x="81.8" y="858.3" width="1.2" height="3.2" fill="#272727"/><rect x="98.8" y="848.5" width="1.9" height="15" fill="#141414"/><rect x="145" y="848.5" width="1.9" height="15" fill="#141414"/><rect x="192.5" y="848.5" width="1.9" height="15" fill="#141414"/><rect x="379.3" y="848.5" width="1.9" height="15" fill="#141414"/><rect x="576" y="848.5" width="1.9" height="15" fill="#141414"/><rect x="744" y="848.5" width="1.9" height="15" fill="#141414"/><path d="M119.5,850.5 L121,848 L129.5,848.2 L137,856.3 L128.5,864.6 L120,856 Z" fill="#b4b4b4"/><circle cx="123.3" cy="851" r="1.6" fill="#272727"/><path d="M389,856 A6,6 0 0 1 401,856 Z" fill="#b4b4b4"/><circle cx="392.8" cy="853.6" r="1.6" fill="#262626"/><circle cx="397.2" cy="853.6" r="1.6" fill="#262626"/><rect x="393.5" y="856" width="3" height="6" rx="1.5" fill="#b4b4b4"/><rect x="386" y="857" width="6" height="1.5" fill="#b4b4b4"/><rect x="398" y="857" width="6" height="1.5" fill="#b4b4b4"/><circle cx="417" cy="855.8" r="2.6" stroke="#b4b4b4" stroke-width="1.4" fill="none"/><path d="M421.10,855.80 L423.60,855.80" stroke="#b4b4b4" stroke-width="1.3"/><path d="M419.90,858.70 L421.67,860.47" stroke="#b4b4b4" stroke-width="1.3"/><path d="M417.00,859.90 L417.00,862.40" stroke="#b4b4b4" stroke-width="1.3"/><path d="M414.10,858.70 L412.33,860.47" stroke="#b4b4b4" stroke-width="1.3"/><path d="M412.90,855.80 L410.40,855.80" stroke="#b4b4b4" stroke-width="1.3"/><path d="M414.10,852.90 L412.33,851.13" stroke="#b4b4b4" stroke-width="1.3"/><path d="M417.00,851.70 L417.00,849.20" stroke="#b4b4b4" stroke-width="1.3"/><path d="M419.90,852.90 L421.67,851.13" stroke="#b4b4b4" stroke-width="1.3"/><path d="M430.5,848.5 L445,863.5" stroke="#b4b4b4" stroke-width="2" stroke-dasharray="2.4,1.6"/><text x="451" y="862.5" font-family="Liberation Serif" font-style="italic" font-size="18" fill="#b4b4b4">fx</text><rect x="472.5" y="849" width="16.5" height="15" fill="none" stroke="#b4b4b4" stroke-width="1.2"/><rect x="475" y="847.8" width="14" height="13.5" fill="#b4b4b4"/><rect x="477.5" y="849.2" width="9" height="10.5" fill="#777"/><rect x="478.5" y="853.7" width="7" height="1.6" fill="#272727"/><circle cx="499.5" cy="860" r="5" stroke="#b4b4b4" stroke-width="1.3" fill="#272727"/><circle cx="502.5" cy="857" r="5" stroke="#b4b4b4" stroke-width="1.3" fill="#272727"/><circle cx="506" cy="853" r="6" stroke="#b4b4b4" stroke-width="1.3" fill="#666"/><circle cx="524.5" cy="855.8" r="7" fill="#b4b4b4"/><path d="M519.5,860.8 L529.5,850.8 A7,7 0 0 1 519.5,860.8 Z" fill="#272727"/><circle cx="524.5" cy="855.8" r="7" stroke="#b4b4b4" stroke-width="1.2" fill="none"/><path d="M546,848.5 L552.5,851.5 L552.5,859.5 L546,862.8 L539.5,859.5 L539.5,851.5 Z M539.5,851.5 L546,854.8 L552.5,851.5 M546,854.8 L546,862.8" stroke="#b4b4b4" stroke-width="1.4" fill="none" stroke-linejoin="round"/><rect x="3" y="870" width="763" height="23" fill="#2b2b2b"/><rect x="3" y="893" width="763" height="1.4" fill="#1c1c1c"/><rect x="3" y="894.4" width="763" height="22.6" fill="#3e3e3e"/><rect x="3" y="916.8" width="763" height="1.5" fill="#1e1e1e"/><rect x="8.8" y="871.2" width="18.2" height="18" fill="#1f1f1f"/><path d="M10.3,880.2 Q18.3,871.7 26.3,880.2 Q18.3,888.7 10.3,880.2 Z" fill="#b8b8b8"/><circle cx="18.3" cy="880.2" r="3.3" fill="#2a2a2a"/><circle cx="19.2" cy="879.3000000000001" r="1.1" fill="#b8b8b8"/><rect x="8.8" y="895.5" width="18.2" height="18.2" fill="#333333"/><path d="M10.3,904.5 Q18.3,896.0 26.3,904.5 Q18.3,913.0 10.3,904.5 Z" fill="#b8b8b8"/><circle cx="18.3" cy="904.5" r="3.3" fill="#2a2a2a"/><circle cx="19.2" cy="903.6" r="1.1" fill="#b8b8b8"/><rect x="52" y="871.2" width="18" height="18" fill="#222222"/><rect x="73.2" y="871.2" width="18.6" height="18" fill="#222222"/><rect x="52" y="895.5" width="18" height="18" fill="#363636"/><rect x="73.2" y="895.5" width="18.6" height="18" fill="#363636"/><path d="M108.4,876.8 L113.6,882 L108.4,887.2" stroke="#a8a8a8" stroke-width="1.5" fill="none"/><path d="M108.8,903.2 L114,908.4 L119.2,903.2" stroke="#a8a8a8" stroke-width="1.5" fill="none"/><rect x="125" y="872.8" width="17.2" height="16.8" fill="#b83838"/><rect x="125" y="897" width="17.2" height="17" fill="#b83838"/><path d="M199,874.6 L211,874.6 L211,879 L209.7,879 L209.5,876.6 L206.3,876.6 L206.3,884.7 L208.3,885 L208.3,886.4 L201.7,886.4 L201.7,885 L203.7,884.7 L203.7,876.6 L200.5,876.6 L200.3,879 L199,879 Z" fill="#c0c0c0"/><rect x="196.5" y="895.5" width="20.5" height="20" fill="#000000"/><rect x="219.8" y="894.3" width="159.2" height="22" fill="#a9a9a9"/><rect x="386" y="871.3" width="18.2" height="18" fill="#242424"/><rect x="407.8" y="871.3" width="18.2" height="18" fill="#242424"/><rect x="429" y="871.3" width="18.2" height="18" fill="#242424"/><rect x="450.8" y="871.3" width="18.2" height="18" fill="#242424"/><rect x="494" y="871.3" width="18" height="18.2" fill="#242424"/><rect x="494" y="895.5" width="18" height="18.2" fill="#393939"/><rect x="515" y="871.3" width="18" height="18.2" fill="#242424"/><rect x="515" y="895.5" width="18" height="18.2" fill="#393939"/><rect x="537" y="871.3" width="18" height="18.2" fill="#242424"/><rect x="537" y="895.5" width="18" height="18.2" fill="#393939"/><rect x="386" y="895.5" width="18.2" height="18" fill="#393939"/><rect x="407.8" y="895.5" width="18.2" height="18" fill="#393939"/><rect x="429" y="895.5" width="18.2" height="18" fill="#393939"/><path d="M389.5,881.5 A6,6 0 0 1 401.5,881.5 Z" fill="#b4b4b4"/><circle cx="393.3" cy="879.1" r="1.6" fill="#262626"/><circle cx="397.7" cy="879.1" r="1.6" fill="#262626"/><rect x="394.0" y="881.5" width="3" height="6" rx="1.5" fill="#b4b4b4"/><rect x="386.5" y="882.5" width="6" height="1.5" fill="#b4b4b4"/><rect x="398.5" y="882.5" width="6" height="1.5" fill="#b4b4b4"/><path d="M389.5,905.5 A6,6 0 0 1 401.5,905.5 Z" fill="#b4b4b4"/><circle cx="393.3" cy="903.1" r="1.6" fill="#262626"/><circle cx="397.7" cy="903.1" r="1.6" fill="#262626"/><rect x="394.0" y="905.5" width="3" height="6" rx="1.5" fill="#b4b4b4"/><rect x="386.5" y="906.5" width="6" height="1.5" fill="#b4b4b4"/><rect x="398.5" y="906.5" width="6" height="1.5" fill="#b4b4b4"/><circle cx="417" cy="880.3" r="2.6" stroke="#a0a0a0" stroke-width="1.4" fill="none"/><path d="M421.10,880.30 L423.60,880.30" stroke="#a0a0a0" stroke-width="1.3"/><path d="M419.90,883.20 L421.67,884.97" stroke="#a0a0a0" stroke-width="1.3"/><path d="M417.00,884.40 L417.00,886.90" stroke="#a0a0a0" stroke-width="1.3"/><path d="M414.10,883.20 L412.33,884.97" stroke="#a0a0a0" stroke-width="1.3"/><path d="M412.90,880.30 L410.40,880.30" stroke="#a0a0a0" stroke-width="1.3"/><path d="M414.10,877.40 L412.33,875.63" stroke="#a0a0a0" stroke-width="1.3"/><path d="M417.00,876.20 L417.00,873.70" stroke="#a0a0a0" stroke-width="1.3"/><path d="M419.90,877.40 L421.67,875.63" stroke="#a0a0a0" stroke-width="1.3"/><path d="M431.5,886.8 L445,873.5" stroke="#b4b4b4" stroke-width="1.7"/><path d="M431.5,911 L445,897.5" stroke="#b4b4b4" stroke-width="1.7"/><text x="451" y="887" font-family="Liberation Serif" font-style="italic" font-size="18" fill="#b4b4b4">fx</text><rect x="578" y="870" width="31" height="23" fill="#2b2b2b"/><path d="M591.74,879.31 L591.59,879.21 L591.41,879.14 L591.21,879.10 L590.99,879.10 L590.76,879.14 L590.54,879.22 L590.31,879.34 L590.11,879.51 L589.92,879.71 L589.77,879.96 L589.65,880.24 L589.58,880.55 L589.56,880.88 L589.59,881.22 L589.68,881.56 L589.83,881.89 L590.04,882.21 L590.30,882.50 L590.62,882.75 L590.99,882.96 L591.39,883.10 L591.83,883.19 L592.28,883.20 L592.75,883.15 L593.21,883.01 L593.66,882.80 L594.08,882.52 L594.46,882.16 L594.79,881.74 L595.06,881.26 L595.25,880.73 L595.36,880.17 L595.38,879.58 L595.31,878.99 L595.14,878.40 L594.88,877.83 L594.52,877.30 L594.08,876.82 L593.56,876.40 L592.98,876.07 L592.33,875.82 L591.64,875.68 L590.92,875.64 L590.20,875.71 L589.48,875.90 L588.79,876.21 L588.14,876.62 L587.55,877.14 L587.04,877.75 L586.62,878.44 L586.31,879.20 L586.12,880.01 L586.06,880.86 L586.12,881.72 L586.32,882.57 L586.66,883.39 L587.12,884.16 L587.70,884.86 L588.40,885.48 L589.19,885.98 L590.06,886.37 L590.99,886.62 L591.96,886.72 L592.96,886.68 L593.94,886.48 L594.90,886.12 L595.80,885.62 L596.62,884.98 L597.35,884.21 L597.95,883.33 L598.42,882.35 L598.74,881.30 L598.90,880.20 L598.88,879.08 L598.69,877.96 L598.33,876.87 L597.80,875.84 L597.11,874.88 L596.28,874.04 L595.31,873.32" stroke="#b0b0b0" stroke-width="1.45" fill="none" stroke-linecap="round"/><path d="M591.74,903.61 L591.59,903.51 L591.41,903.44 L591.21,903.40 L590.99,903.40 L590.76,903.44 L590.54,903.52 L590.31,903.64 L590.11,903.81 L589.92,904.01 L589.77,904.26 L589.65,904.54 L589.58,904.85 L589.56,905.18 L589.59,905.52 L589.68,905.86 L589.83,906.19 L590.04,906.51 L590.30,906.80 L590.62,907.05 L590.99,907.26 L591.39,907.40 L591.83,907.49 L592.28,907.50 L592.75,907.45 L593.21,907.31 L593.66,907.10 L594.08,906.82 L594.46,906.46 L594.79,906.04 L595.06,905.56 L595.25,905.03 L595.36,904.47 L595.38,903.88 L595.31,903.29 L595.14,902.70 L594.88,902.13 L594.52,901.60 L594.08,901.12 L593.56,900.70 L592.98,900.37 L592.33,900.12 L591.64,899.98 L590.92,899.94 L590.20,900.01 L589.48,900.20 L588.79,900.51 L588.14,900.92 L587.55,901.44 L587.04,902.05 L586.62,902.74 L586.31,903.50 L586.12,904.31 L586.06,905.16 L586.12,906.02 L586.32,906.87 L586.66,907.69 L587.12,908.46 L587.70,909.16 L588.40,909.78 L589.19,910.28 L590.06,910.67 L590.99,910.92 L591.96,911.02 L592.96,910.98 L593.94,910.78 L594.90,910.42 L595.80,909.92 L596.62,909.28 L597.35,908.51 L597.95,907.63 L598.42,906.65 L598.74,905.60 L598.90,904.50 L598.88,903.38 L598.69,902.26 L598.33,901.17 L597.80,900.14 L597.11,899.18 L596.28,898.34 L595.31,897.62" stroke="#b0b0b0" stroke-width="1.45" fill="none" stroke-linecap="round"/><rect x="609.7" y="871.3" width="128" height="19.5" fill="#1a1a1a"/><rect x="609.7" y="895" width="128" height="20.6" fill="#1a1a1a"/><path d="M720,878.5 L725.3,883.8 L730.6,878.5" stroke="#c8c8c8" stroke-width="1.6" fill="none"/><path d="M720,902.5 L725.3,907.8 L730.6,902.5" stroke="#c8c8c8" stroke-width="1.6" fill="none"/><rect x="3" y="942" width="763" height="1.3" fill="#1e1e1e"/><rect x="3" y="966.4" width="763" height="1.3" fill="#1e1e1e"/><rect x="3" y="990.8" width="763" height="1.3" fill="#1e1e1e"/><rect x="3" y="1015" width="763" height="1.3" fill="#1e1e1e"/><rect x="3" y="1039.4" width="763" height="1.3" fill="#1e1e1e"/><rect x="3" y="1063.8" width="763" height="1.3" fill="#1e1e1e"/><path d="M133.4,928.4 L138.7,933.6 L144,928.4" stroke="#a8a8a8" stroke-width="1.5" fill="none"/><circle cx="184.3" cy="955.3" r="6.9" stroke="#b4b4b4" stroke-width="1.5" fill="none"/><rect x="181.3" y="944.3" width="6" height="1.5" fill="#b4b4b4"/><rect x="183.55" y="945.3" width="1.5" height="3" fill="#b4b4b4"/><path d="M177.3,947.9 L179.70000000000002,950.0999999999999" stroke="#b4b4b4" stroke-width="1.4"/><path d="M610.34,953.21 L610.19,953.11 L610.01,953.04 L609.81,953.00 L609.59,953.00 L609.36,953.04 L609.14,953.12 L608.91,953.24 L608.71,953.41 L608.52,953.61 L608.37,953.86 L608.25,954.14 L608.18,954.45 L608.16,954.78 L608.19,955.12 L608.28,955.46 L608.43,955.79 L608.64,956.11 L608.90,956.40 L609.22,956.65 L609.59,956.86 L609.99,957.00 L610.43,957.09 L610.88,957.10 L611.35,957.05 L611.81,956.91 L612.26,956.70 L612.68,956.42 L613.06,956.06 L613.39,955.64 L613.66,955.16 L613.85,954.63 L613.96,954.07 L613.98,953.48 L613.91,952.89 L613.74,952.30 L613.48,951.73 L613.12,951.20 L612.68,950.72 L612.16,950.30 L611.58,949.97 L610.93,949.72 L610.24,949.58 L609.52,949.54 L608.80,949.61 L608.08,949.80 L607.39,950.11 L606.74,950.52 L606.15,951.04 L605.64,951.65 L605.22,952.34 L604.91,953.10 L604.72,953.91 L604.66,954.76 L604.72,955.62 L604.92,956.47 L605.26,957.29 L605.72,958.06 L606.30,958.76 L607.00,959.38 L607.79,959.88 L608.66,960.27 L609.59,960.52 L610.56,960.62 L611.56,960.58 L612.54,960.38 L613.50,960.02 L614.40,959.52 L615.22,958.88 L615.95,958.11 L616.55,957.23 L617.02,956.25 L617.34,955.20 L617.50,954.10 L617.48,952.98 L617.29,951.86 L616.93,950.77 L616.40,949.74 L615.71,948.78 L614.88,947.94 L613.91,947.22" stroke="#b0b0b0" stroke-width="1.45" fill="none" stroke-linecap="round"/><circle cx="184.3" cy="979.6999999999999" r="6.9" stroke="#b4b4b4" stroke-width="1.5" fill="none"/><rect x="181.3" y="968.6999999999999" width="6" height="1.5" fill="#b4b4b4"/><rect x="183.55" y="969.6999999999999" width="1.5" height="3" fill="#b4b4b4"/><path d="M177.3,972.3 L179.70000000000002,974.4999999999999" stroke="#b4b4b4" stroke-width="1.4"/><path d="M610.34,977.61 L610.19,977.51 L610.01,977.44 L609.81,977.40 L609.59,977.40 L609.36,977.44 L609.14,977.52 L608.91,977.64 L608.71,977.81 L608.52,978.01 L608.37,978.26 L608.25,978.54 L608.18,978.85 L608.16,979.18 L608.19,979.52 L608.28,979.86 L608.43,980.19 L608.64,980.51 L608.90,980.80 L609.22,981.05 L609.59,981.26 L609.99,981.40 L610.43,981.49 L610.88,981.50 L611.35,981.45 L611.81,981.31 L612.26,981.10 L612.68,980.82 L613.06,980.46 L613.39,980.04 L613.66,979.56 L613.85,979.03 L613.96,978.47 L613.98,977.88 L613.91,977.29 L613.74,976.70 L613.48,976.13 L613.12,975.60 L612.68,975.12 L612.16,974.70 L611.58,974.37 L610.93,974.12 L610.24,973.98 L609.52,973.94 L608.80,974.01 L608.08,974.20 L607.39,974.51 L606.74,974.92 L606.15,975.44 L605.64,976.05 L605.22,976.74 L604.91,977.50 L604.72,978.31 L604.66,979.16 L604.72,980.02 L604.92,980.87 L605.26,981.69 L605.72,982.46 L606.30,983.16 L607.00,983.78 L607.79,984.28 L608.66,984.67 L609.59,984.92 L610.56,985.02 L611.56,984.98 L612.54,984.78 L613.50,984.42 L614.40,983.92 L615.22,983.28 L615.95,982.51 L616.55,981.63 L617.02,980.65 L617.34,979.60 L617.50,978.50 L617.48,977.38 L617.29,976.26 L616.93,975.17 L616.40,974.14 L615.71,973.18 L614.88,972.34 L613.91,971.62" stroke="#b0b0b0" stroke-width="1.45" fill="none" stroke-linecap="round"/><circle cx="184.3" cy="1004.0999999999999" r="6.9" stroke="#b4b4b4" stroke-width="1.5" fill="none"/><rect x="181.3" y="993.0999999999999" width="6" height="1.5" fill="#b4b4b4"/><rect x="183.55" y="994.0999999999999" width="1.5" height="3" fill="#b4b4b4"/><path d="M177.3,996.6999999999999 L179.70000000000002,998.8999999999999" stroke="#b4b4b4" stroke-width="1.4"/><path d="M610.34,1002.01 L610.19,1001.91 L610.01,1001.84 L609.81,1001.80 L609.59,1001.80 L609.36,1001.84 L609.14,1001.92 L608.91,1002.04 L608.71,1002.21 L608.52,1002.41 L608.37,1002.66 L608.25,1002.94 L608.18,1003.25 L608.16,1003.58 L608.19,1003.92 L608.28,1004.26 L608.43,1004.59 L608.64,1004.91 L608.90,1005.20 L609.22,1005.45 L609.59,1005.66 L609.99,1005.80 L610.43,1005.89 L610.88,1005.90 L611.35,1005.85 L611.81,1005.71 L612.26,1005.50 L612.68,1005.22 L613.06,1004.86 L613.39,1004.44 L613.66,1003.96 L613.85,1003.43 L613.96,1002.87 L613.98,1002.28 L613.91,1001.69 L613.74,1001.10 L613.48,1000.53 L613.12,1000.00 L612.68,999.52 L612.16,999.10 L611.58,998.77 L610.93,998.52 L610.24,998.38 L609.52,998.34 L608.80,998.41 L608.08,998.60 L607.39,998.91 L606.74,999.32 L606.15,999.84 L605.64,1000.45 L605.22,1001.14 L604.91,1001.90 L604.72,1002.71 L604.66,1003.56 L604.72,1004.42 L604.92,1005.27 L605.26,1006.09 L605.72,1006.86 L606.30,1007.56 L607.00,1008.18 L607.79,1008.68 L608.66,1009.07 L609.59,1009.32 L610.56,1009.42 L611.56,1009.38 L612.54,1009.18 L613.50,1008.82 L614.40,1008.32 L615.22,1007.68 L615.95,1006.91 L616.55,1006.03 L617.02,1005.05 L617.34,1004.00 L617.50,1002.90 L617.48,1001.78 L617.29,1000.66 L616.93,999.57 L616.40,998.54 L615.71,997.58 L614.88,996.74 L613.91,996.02" stroke="#b0b0b0" stroke-width="1.45" fill="none" stroke-linecap="round"/><circle cx="184.3" cy="1028.5" r="6.9" stroke="#b4b4b4" stroke-width="1.5" fill="none"/><rect x="181.3" y="1017.5" width="6" height="1.5" fill="#b4b4b4"/><rect x="183.55" y="1018.5" width="1.5" height="3" fill="#b4b4b4"/><path d="M177.3,1021.1 L179.70000000000002,1023.3" stroke="#b4b4b4" stroke-width="1.4"/><path d="M610.34,1026.41 L610.19,1026.31 L610.01,1026.24 L609.81,1026.20 L609.59,1026.20 L609.36,1026.24 L609.14,1026.32 L608.91,1026.44 L608.71,1026.61 L608.52,1026.81 L608.37,1027.06 L608.25,1027.34 L608.18,1027.65 L608.16,1027.98 L608.19,1028.32 L608.28,1028.66 L608.43,1028.99 L608.64,1029.31 L608.90,1029.60 L609.22,1029.85 L609.59,1030.06 L609.99,1030.20 L610.43,1030.29 L610.88,1030.30 L611.35,1030.25 L611.81,1030.11 L612.26,1029.90 L612.68,1029.62 L613.06,1029.26 L613.39,1028.84 L613.66,1028.36 L613.85,1027.83 L613.96,1027.27 L613.98,1026.68 L613.91,1026.09 L613.74,1025.50 L613.48,1024.93 L613.12,1024.40 L612.68,1023.92 L612.16,1023.50 L611.58,1023.17 L610.93,1022.92 L610.24,1022.78 L609.52,1022.74 L608.80,1022.81 L608.08,1023.00 L607.39,1023.31 L606.74,1023.72 L606.15,1024.24 L605.64,1024.85 L605.22,1025.54 L604.91,1026.30 L604.72,1027.11 L604.66,1027.96 L604.72,1028.82 L604.92,1029.67 L605.26,1030.49 L605.72,1031.26 L606.30,1031.96 L607.00,1032.58 L607.79,1033.08 L608.66,1033.47 L609.59,1033.72 L610.56,1033.82 L611.56,1033.78 L612.54,1033.58 L613.50,1033.22 L614.40,1032.72 L615.22,1032.08 L615.95,1031.31 L616.55,1030.43 L617.02,1029.45 L617.34,1028.40 L617.50,1027.30 L617.48,1026.18 L617.29,1025.06 L616.93,1023.97 L616.40,1022.94 L615.71,1021.98 L614.88,1021.14 L613.91,1020.42" stroke="#b0b0b0" stroke-width="1.45" fill="none" stroke-linecap="round"/><circle cx="184.3" cy="1052.8999999999999" r="6.9" stroke="#b4b4b4" stroke-width="1.5" fill="none"/><rect x="181.3" y="1041.8999999999999" width="6" height="1.5" fill="#b4b4b4"/><rect x="183.55" y="1042.8999999999999" width="1.5" height="3" fill="#b4b4b4"/><path d="M177.3,1045.4999999999998 L179.70000000000002,1047.6999999999998" stroke="#b4b4b4" stroke-width="1.4"/><path d="M610.34,1050.81 L610.19,1050.71 L610.01,1050.64 L609.81,1050.60 L609.59,1050.60 L609.36,1050.64 L609.14,1050.72 L608.91,1050.84 L608.71,1051.01 L608.52,1051.21 L608.37,1051.46 L608.25,1051.74 L608.18,1052.05 L608.16,1052.38 L608.19,1052.72 L608.28,1053.06 L608.43,1053.39 L608.64,1053.71 L608.90,1054.00 L609.22,1054.25 L609.59,1054.46 L609.99,1054.60 L610.43,1054.69 L610.88,1054.70 L611.35,1054.65 L611.81,1054.51 L612.26,1054.30 L612.68,1054.02 L613.06,1053.66 L613.39,1053.24 L613.66,1052.76 L613.85,1052.23 L613.96,1051.67 L613.98,1051.08 L613.91,1050.49 L613.74,1049.90 L613.48,1049.33 L613.12,1048.80 L612.68,1048.32 L612.16,1047.90 L611.58,1047.57 L610.93,1047.32 L610.24,1047.18 L609.52,1047.14 L608.80,1047.21 L608.08,1047.40 L607.39,1047.71 L606.74,1048.12 L606.15,1048.64 L605.64,1049.25 L605.22,1049.94 L604.91,1050.70 L604.72,1051.51 L604.66,1052.36 L604.72,1053.22 L604.92,1054.07 L605.26,1054.89 L605.72,1055.66 L606.30,1056.36 L607.00,1056.98 L607.79,1057.48 L608.66,1057.87 L609.59,1058.12 L610.56,1058.22 L611.56,1058.18 L612.54,1057.98 L613.50,1057.62 L614.40,1057.12 L615.22,1056.48 L615.95,1055.71 L616.55,1054.83 L617.02,1053.85 L617.34,1052.80 L617.50,1051.70 L617.48,1050.58 L617.29,1049.46 L616.93,1048.37 L616.40,1047.34 L615.71,1046.38 L614.88,1045.54 L613.91,1044.82" stroke="#b0b0b0" stroke-width="1.45" fill="none" stroke-linecap="round"/><path d="M83.5,1002.8 L134,1002.8" stroke="#00e600" stroke-width="4.4" stroke-linecap="round"/><path d="M132.8,995.3 L171,1002.8 L132.8,1010.3 Z" fill="#00e600"/><rect x="384.7" y="992.7" width="19.6" height="20" fill="#1a1a1a"/><path d="M392,1000.3 L389,1000.3 A2.8,2.8 0 0 0 389,1006 L392,1006 M397.5,1000.3 L400.5,1000.3 A2.8,2.8 0 0 1 400.5,1006 L397.5,1006 M391,1003.2 L398.5,1003.2" stroke="#c0c0c0" stroke-width="1.8" fill="none"/><rect x="412" y="989.2" width="61" height="27.3" fill="#00e600"/><rect x="416.2" y="993.4" width="52.4" height="18.8" fill="#e6e6e6"/><rect x="441.4" y="995" width="2.6" height="17" fill="#111"/></svg>
<svg style="left:0;top:0" width="1999" height="1226" viewBox="0 0 1999 1226"><rect x="768" y="917.2" width="1204" height="281" fill="#343434"/><rect x="768" y="917.2" width="10" height="281" fill="#2f2f2f"/><rect x="1962.3" y="917.2" width="10" height="281" fill="#2b2b2b"/><rect x="1972" y="841" width="24" height="357" fill="#222222"/><rect x="1972" y="841" width="24" height="28" fill="#262626"/><rect x="1972" y="869" width="24" height="24" fill="#242424"/><rect x="1972" y="868.5" width="24" height="1.2" fill="#1c1c1c"/><rect x="1972" y="893" width="24" height="1.2" fill="#1c1c1c"/><rect x="768" y="942" width="1204" height="1.4" fill="#242424"/><rect x="768" y="966.4" width="1204" height="1.4" fill="#242424"/><rect x="768" y="990.8" width="1204" height="1.4" fill="#242424"/><rect x="768" y="1015" width="1204" height="1.4" fill="#242424"/><rect x="768" y="1039.4" width="1204" height="1.4" fill="#242424"/><rect x="768" y="1063.8" width="1204" height="1.4" fill="#242424"/><rect x="776" y="797.8" width="1187" height="14.2" fill="#0e0e0e"/><rect x="777.4" y="799.4" width="1184.6" height="11.6" fill="#686868"/><path d="M776.5,799 L772,799 A4.4,6 0 0 0 772,811 L776.5,811 Z" fill="#2f8eec"/><path d="M1962,799 L1966,799 A6,6 0 0 1 1966,811 L1962,811 Z" fill="#2f8eec"/><rect x="777.8" y="799.4" width="1.2" height="11.6" fill="#2f8eec"/><rect x="777.60" y="832.8" width="1.3" height="6" fill="#9a9a9a"/><rect x="876.29" y="832.8" width="1.3" height="6" fill="#9a9a9a"/><rect x="974.98" y="832.8" width="1.3" height="6" fill="#9a9a9a"/><rect x="1073.67" y="832.8" width="1.3" height="6" fill="#9a9a9a"/><rect x="1172.36" y="832.8" width="1.3" height="6" fill="#9a9a9a"/><rect x="1271.05" y="832.8" width="1.3" height="6" fill="#9a9a9a"/><rect x="1369.74" y="832.8" width="1.3" height="6" fill="#9a9a9a"/><rect x="1468.43" y="832.8" width="1.3" height="6" fill="#9a9a9a"/><rect x="1567.12" y="832.8" width="1.3" height="6" fill="#9a9a9a"/><rect x="1665.81" y="832.8" width="1.3" height="6" fill="#9a9a9a"/><rect x="1764.50" y="832.8" width="1.3" height="6" fill="#9a9a9a"/><rect x="1863.19" y="832.8" width="1.3" height="6" fill="#9a9a9a"/><rect x="1961.88" y="832.8" width="1.3" height="6" fill="#9a9a9a"/><rect x="768" y="839.5" width="1204" height="1.5" fill="#151515"/><rect x="768" y="841" width="1204" height="22" fill="#0e0e0e"/><rect x="777.4" y="841" width="1184.6" height="21.6" fill="#626262"/><path d="M776.6,840.6 L774.5,840.6 A5.5,7 0 0 0 769,847.6 L769,855.6 A5.5,7 0 0 0 774.5,862.6 L776.6,862.6 Z" fill="#2f8eec"/><path d="M1962,840.8 L1965,840.8 A6,6 0 0 1 1971,846.8 L1971,856.6 A6,6 0 0 1 1965,862.6 L1962,862.6 Z" fill="#2f8eec"/><rect x="768" y="863" width="1204" height="7" fill="#1e1e1e"/><rect x="777.4" y="864" width="1184.6" height="4.6" fill="#12c128"/><rect x="768" y="869.6" width="1194.3" height="23" fill="#2b2b2b"/><rect x="778" y="870" width="1184.3" height="22.2" fill="#7e3b3b"/><rect x="1962.3" y="870" width="10" height="22.6" fill="#2d2d2d"/><rect x="768" y="892.6" width="1204" height="1.5" fill="#1c1c1c"/><rect x="768" y="894" width="1194.3" height="23" fill="#3e3e3e"/><defs><filter id="noise" x="0" y="0" width="100%" height="100%"><feTurbulence type="fractalNoise" baseFrequency="0.9" numOctaves="2" seed="3" result="n"/><feColorMatrix in="n" type="matrix" values="0 0 0 0 0.78  0 0 0 0 0.38  0 0 0 0 0.38  0 0 0 0.6 -0.22" result="c"/><feComposite in="c" in2="SourceGraphic" operator="in" result="cc"/><feMerge><feMergeNode in="SourceGraphic"/><feMergeNode in="cc"/></feMerge></filter></defs><rect x="778" y="894" width="1184.3" height="22.8" fill="#a64647" filter="url(#noise)"/><rect x="778" y="894" width="1184.3" height="1.2" fill="#c06060"/><rect x="1962.3" y="894" width="10" height="23" fill="#414141"/><rect x="768" y="916.8" width="1204" height="1.2" fill="#1e1e1e"/><path d="M773.3,923.3 L784.0,923.3 M773.3,938.0 L784.0,938.0" stroke="#b4b4b4" stroke-width="1.6"/><rect x="777.5" y="922.5" width="2.6" height="16.3" fill="#b4b4b4"/><path d="M773.3,947.6999999999999 L784.0,947.6999999999999 M773.3,962.4 L784.0,962.4" stroke="#b4b4b4" stroke-width="1.6"/><rect x="777.5" y="946.9" width="2.6" height="16.3" fill="#b4b4b4"/><path d="M773.3,972.0999999999999 L784.0,972.0999999999999 M773.3,986.8 L784.0,986.8" stroke="#b4b4b4" stroke-width="1.6"/><rect x="777.5" y="971.3" width="2.6" height="16.3" fill="#b4b4b4"/><path d="M773.3,996.5 L784.0,996.5 M773.3,1011.2 L784.0,1011.2" stroke="#b4b4b4" stroke-width="1.6"/><rect x="777.5" y="995.7" width="2.6" height="16.3" fill="#b4b4b4"/><path d="M773.3,1020.9 L784.0,1020.9 M773.3,1035.6 L784.0,1035.6" stroke="#b4b4b4" stroke-width="1.6"/><rect x="777.5" y="1020.1" width="2.6" height="16.3" fill="#b4b4b4"/><path d="M773.3,1045.3 L784.0,1045.3 M773.3,1060.0 L784.0,1060.0" stroke="#b4b4b4" stroke-width="1.6"/><rect x="777.5" y="1044.5" width="2.6" height="16.3" fill="#b4b4b4"/><path d="M1977.6,843.8 L1993,843.8 L1993,857.6 L1985.3,864 L1977.6,857.6 Z" fill="#a8a8a8"/><path d="M1984,874.3 L1974.5,885.3 L1983,885.3" stroke="#b0b0b0" stroke-width="1.2" fill="none"/><rect x="1984" y="877" width="9.2" height="8.6" fill="#a8a8a8"/><circle cx="1982.4" cy="886" r="3.6" stroke="#b0b0b0" stroke-width="1.3" fill="#262626"/><rect x="3" y="1198" width="918" height="2" fill="#0f0f0f"/><rect x="3" y="1200" width="918" height="22.4" fill="#262626"/><rect x="921" y="1197.6" width="1075" height="24.8" fill="#212121"/><rect x="9" y="1200.4" width="24.2" height="21" fill="#232323" stroke="#2b2b2b" stroke-width="0.8"/><rect x="13.7" y="1205" width="8" height="8" fill="#232323" stroke="#2f8eec" stroke-width="1.4"/><rect x="16.7" y="1208" width="8" height="8" fill="#232323" stroke="#2f8eec" stroke-width="1.4"/><rect x="19.8" y="1211.3" width="8.5" height="8.3" fill="#232323" stroke="#2f8eec" stroke-width="1.4"/><circle cx="24" cy="1215.5" r="1.3" fill="#2f8eec"/><circle cx="45.8" cy="1209.5" r="5.4" stroke="#b4b4b4" stroke-width="1.3" fill="none"/><rect x="46.5" y="1210" width="9.2" height="9.6" stroke="#b4b4b4" stroke-width="1.3" fill="#262626"/><path d="M47,1210.5 L51,1210.5 A5,5 0 0 1 47,1214.5 Z" fill="#b4b4b4"/><path d="M70.5,1203.5 L69.3,1203.5 L69.3,1209 L67.3,1210.4 L69.3,1211.8 L69.3,1217.5 L70.5,1217.5 M79.5,1203.5 L80.7,1203.5 L80.7,1209 L82.7,1210.4 L80.7,1211.8 L80.7,1217.5 L79.5,1217.5" stroke="#b4b4b4" stroke-width="1.5" fill="none"/><rect x="72.5" y="1203" width="5" height="15" fill="#505050"/><circle cx="98.5" cy="1210.6" r="5" fill="#b4b4b4"/><rect x="93.3" y="1215.5" width="16.5" height="1.6" fill="#b4b4b4"/><path d="M103,1213 L106,1208 M104.5,1213 L110,1208.5" stroke="#b4b4b4" stroke-width="1"/><circle cx="106.3" cy="1207.3" r="1" fill="#b4b4b4"/><circle cx="110.3" cy="1208" r="1" fill="#b4b4b4"/><rect x="383.4" y="1201" width="190.3" height="19.4" rx="2" fill="#1e1e1e"/><path d="M775,1213 L780,1208 L782,1210 L784,1206.5 L789.5,1213 Z" fill="#b4b4b4"/><rect x="819" y="1209.4" width="55" height="1.6" fill="#404040"/><circle cx="812" cy="1212.3" r="5.9" stroke="#b4b4b4" stroke-width="2.2" fill="#262626"/><path d="M890.6,1215.5 L895,1209.5 L898,1209.5 L894.5,1215.5 Z M897,1215.5 L904.3,1205 L914.4,1215.5 Z" fill="#b4b4b4"/></svg>
<div class="t" style="left:69.00px;top:763.55px;font-size:15.3px;line-height:15.3px;color:#c4c4c4;font-weight:normal;">Comp 1</div>
<div class="t" style="left:20.30px;top:796.72px;font-size:21.6px;line-height:21.6px;color:#39a0f2;font-weight:bold;-webkit-text-stroke:0px">0:00:00:00</div>
<div class="t" style="left:17.50px;top:821.15px;font-size:14px;line-height:14px;color:#1d70bd;font-weight:normal;">00000 (24.00 fps)</div>
<div class="t" style="left:153.00px;top:850.00px;font-size:13px;line-height:13px;color:#8c8c8c;font-weight:normal;">#</div>
<div class="t" style="left:200.80px;top:849.57px;font-size:13.5px;line-height:13.5px;color:#949494;font-weight:normal;transform:scaleX(0.92);transform-origin:0 0">Source Name</div>
<div class="t" style="left:584.50px;top:849.77px;font-size:13.5px;line-height:13.5px;color:#949494;font-weight:normal;transform:scaleX(0.93);transform-origin:0 0">Parent &amp; Link</div>
<div class="t" style="left:155.60px;top:872.96px;font-size:16px;line-height:16px;color:#b2b2b2;font-weight:normal;-webkit-text-stroke:0.75px currentColor">1</div>
<div class="t" style="left:155.60px;top:897.46px;font-size:16px;line-height:16px;color:#b2b2b2;font-weight:normal;-webkit-text-stroke:0.75px currentColor">2</div>
<div class="t" style="left:224.80px;top:873.26px;font-size:16px;line-height:16px;color:#bababa;font-weight:normal;-webkit-text-stroke:0.7px currentColor">Heart</div>
<div class="t" style="left:224.80px;top:897.66px;font-size:16px;line-height:16px;color:#1c1c1c;font-weight:normal;-webkit-text-stroke:0.7px currentColor">Black Solid 1</div>
<div class="t" style="left:619.30px;top:873.68px;font-size:15.5px;line-height:15.5px;color:#c4c4c4;font-weight:normal;">None</div>
<div class="t" style="left:619.30px;top:897.88px;font-size:15.5px;line-height:15.5px;color:#c4c4c4;font-weight:normal;">None</div>
<div class="t" style="left:155.30px;top:923.96px;font-size:16px;line-height:16px;color:#aaaaaa;font-weight:normal;">Transform</div>
<div class="t" style="left:386.50px;top:922.58px;font-size:15.5px;line-height:15.5px;color:#3a9ae8;font-weight:normal;">Reset</div>
<div class="t" style="left:202.60px;top:948.26px;font-size:16px;line-height:16px;color:#aaaaaa;font-weight:normal;">Anchor Point</div>
<div class="t" style="left:202.60px;top:972.66px;font-size:16px;line-height:16px;color:#aaaaaa;font-weight:normal;">Position</div>
<div class="t" style="left:202.60px;top:997.06px;font-size:16px;line-height:16px;color:#aaaaaa;font-weight:normal;">Scale</div>
<div class="t" style="left:202.60px;top:1021.46px;font-size:16px;line-height:16px;color:#aaaaaa;font-weight:normal;">Rotation</div>
<div class="t" style="left:202.60px;top:1045.86px;font-size:16px;line-height:16px;color:#aaaaaa;font-weight:normal;">Opacity</div>
<div class="t" style="left:387.50px;top:946.88px;font-size:15.5px;line-height:15.5px;color:#3a9ae8;font-weight:normal;">960,0,540,0</div>
<div class="t" style="left:387.50px;top:971.28px;font-size:15.5px;line-height:15.5px;color:#3a9ae8;font-weight:normal;">960,0,540,0</div>
<div class="t" style="left:425.30px;top:997.50px;font-size:15px;line-height:15px;color:#333333;font-weight:normal;">34</div>
<div class="t" style="left:472.00px;top:996.88px;font-size:15.5px;line-height:15.5px;color:#3a9ae8;font-weight:normal;">,34,0<span style="color:#b0b0b0">%</span></div>
<div class="t" style="left:387.50px;top:1021.08px;font-size:15.5px;line-height:15.5px;color:#3a9ae8;font-weight:normal;">0<span style="color:#b0b0b0">x</span>+0,0<span style="color:#b0b0b0">°</span></div>
<div class="t" style="left:387.50px;top:1045.48px;font-size:15.5px;line-height:15.5px;color:#3a9ae8;font-weight:normal;">100<span style="color:#b0b0b0">%</span></div>
<div class="t" style="left:757.50px;top:816.45px;width:60px;text-align:center;font-size:14px;line-height:14px;color:#a2a2a2">00s</div>
<div class="t" style="left:846.89px;top:816.45px;width:60px;text-align:center;font-size:14px;line-height:14px;color:#a2a2a2">01s</div>
<div class="t" style="left:945.58px;top:816.45px;width:60px;text-align:center;font-size:14px;line-height:14px;color:#a2a2a2">02s</div>
<div class="t" style="left:1044.27px;top:816.45px;width:60px;text-align:center;font-size:14px;line-height:14px;color:#a2a2a2">03s</div>
<div class="t" style="left:1142.96px;top:816.45px;width:60px;text-align:center;font-size:14px;line-height:14px;color:#a2a2a2">04s</div>
<div class="t" style="left:1241.65px;top:816.45px;width:60px;text-align:center;font-size:14px;line-height:14px;color:#a2a2a2">05s</div>
<div class="t" style="left:1340.34px;top:816.45px;width:60px;text-align:center;font-size:14px;line-height:14px;color:#a2a2a2">06s</div>
<div class="t" style="left:1439.03px;top:816.45px;width:60px;text-align:center;font-size:14px;line-height:14px;color:#a2a2a2">07s</div>
<div class="t" style="left:1537.72px;top:816.45px;width:60px;text-align:center;font-size:14px;line-height:14px;color:#a2a2a2">08s</div>
<div class="t" style="left:1636.41px;top:816.45px;width:60px;text-align:center;font-size:14px;line-height:14px;color:#a2a2a2">09s</div>
<div class="t" style="left:1735.10px;top:816.45px;width:60px;text-align:center;font-size:14px;line-height:14px;color:#a2a2a2">10s</div>
<div class="t" style="left:1833.79px;top:816.45px;width:60px;text-align:center;font-size:14px;line-height:14px;color:#a2a2a2">11s</div>
<div class="t" style="left:1932.48px;top:816.45px;width:60px;text-align:center;font-size:14px;line-height:14px;color:#a2a2a2">12s</div>
<svg style="left:0;top:0" width="1999" height="1226" viewBox="0 0 1999 1226"><rect x="777.9" y="830" width="1.4" height="368" fill="#2f8eec"/><path d="M770.2,819.2 L786.6,819.2 L786.6,829 L778.5,838.4 L770.2,829 Z" fill="#2f8eec"/><rect x="776.6" y="828.3" width="4" height="1" fill="#666"/><rect x="778.2" y="828.5" width="0.9" height="10" fill="#9a9a9a"/></svg>
<div class="t" style="left:152.70px;top:1203.88px;font-size:15.5px;line-height:15.5px;color:#949494;font-weight:normal;">Frame Render Time</div>
<div class="t" style="left:297.60px;top:1203.88px;font-size:15.5px;line-height:15.5px;color:#5ad6a4;font-weight:bold;">24ms</div>
<div class="t" style="left:392.00px;top:1203.88px;font-size:15.5px;line-height:15.5px;color:#a2a2a2;font-weight:normal;">Toggle Switches / Modes</div>
</body></html>
